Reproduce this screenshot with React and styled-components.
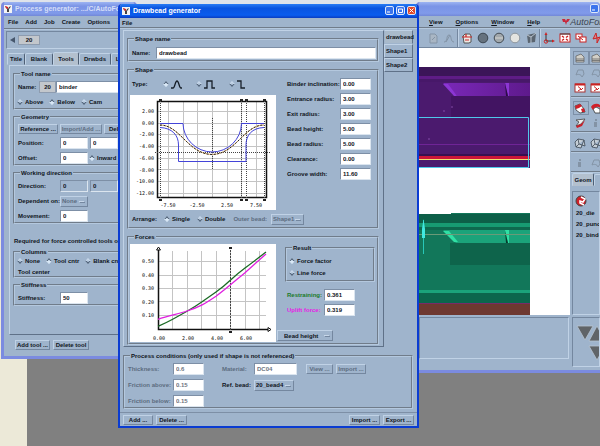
import React, { useState } from 'react';
import styled, { createGlobalStyle } from 'styled-components';

const GlobalStyle = createGlobalStyle`
  * { box-sizing: border-box; }
  body {
    margin: 0;
    font-family: "Liberation Sans", Arial, sans-serif;
    font-size: 6px;
    font-weight: bold;
    line-height: 8px;
    color: #10141c;
  }
  button, input, select { font: inherit; color: inherit; }
`;

const Desktop = styled.div`
  position: relative;
  min-height: 100vh;
  overflow: hidden;
  background:
    linear-gradient(#dfe3ea, #dfe3ea) top / 100% 4px no-repeat,
    linear-gradient(#ece9d8, #ece9d8) left / 27px 100% no-repeat,
    #808080;
`;

// Windows float on the desktop
const Window = styled.section`
  position: absolute;
  display: flex;
  flex-direction: column;
  background: #9fb4cc;
  border: 3px solid ${(p) => (p.$active ? '#0a3cd2' : '#7b8be0')};
  border-top: 0;
  border-radius: 4px 4px 0 0;
  overflow: hidden;
  white-space: nowrap;
`;

const ToolWindow = styled(Window)`
  left: 1px;
  top: 2px;
  width: 136px;
`;

const MainWindow = styled(Window)`
  left: calc(100% - 184px);
  right: 0;
  top: 2px;
  border-right: 0;
`;

const Dialog = styled(Window)`
  left: 118px;
  right: 181px;
  top: 4px;
  border-width: 0 2px 2px;
`;

const TitleBar = styled.header`
  display: flex;
  align-items: center;
  gap: 3px;
  height: 14px;
  padding: 0 1px 1px ${(p) => (p.$active ? 2 : 0)}px;
  color: ${(p) => (p.$active ? '#fff' : '#d5def8')};
  background: ${(p) =>
    p.$active
      ? 'linear-gradient(#2a7cf4, #0a54e0 30%, #0a5cee 80%, #0a3cc0)'
      : 'linear-gradient(#9db4f2, #7a94e6 30%, #809aea 80%, #7288d8)'};
`;

const Title = styled.h1`
  flex: 1;
  margin: 0;
  font-size: 7px;
  line-height: 10px;
`;

const CaptionButton = styled.button`
  display: grid;
  place-items: center;
  flex: none;
  width: 9px;
  height: 9px;
  padding: 0;
  border: 1px solid #dce6fa;
  border-radius: 2px;
  background: ${(p) => (p.$close ? '#e0492a' : '#3c74ec')};
  margin-left: -1px;
`;

const MenuBar = styled.nav`
  display: flex;
  gap: ${(p) => p.$gap || 7}px;
  align-items: center;
  height: ${(p) => p.$h || 14}px;
  padding-left: ${(p) => p.$left || 4}px;
  border-bottom: 2px groove #b4c8de;
`;

const MenuItem = styled.button`
  padding: 0;
  border: 0;
  background: none;
  line-height: 8px;
`;

const Group = styled.fieldset`
  display: flex;
  flex-direction: column;
  gap: 3px;
  min-width: 0;
  margin: 0;
  padding: ${(p) => p.$pad ?? '3px 1px 0'};
  border: 2px groove #b4c8de;
`;

const Legend = styled.legend`
  height: 8px;
  margin-left: 4px;
  padding: 0 1px;
`;

const Row = styled.div`
  display: flex;
  align-items: center;
  gap: ${(p) => p.$gap || 0}px;
  min-height: ${(p) => p.$h || 12}px;
  padding-left: 2px;
`;

const Label = styled.label`
  flex: none;
  width: ${(p) => (p.$w ? `${p.$w}px` : 'auto')};
  color: ${(p) => p.$color || 'inherit'};
`;

const dim = '#5c6c80';

const Input = styled.input`
  flex: ${(p) => (p.$w ? 'none' : '1')};
  width: ${(p) => (p.$w ? `${p.$w}px` : 'auto')};
  min-width: 0;
  height: 12px;
  padding: 0 0 0 2px;
  border: 1px solid;
  border-color: #7d8fa6 #dbe5ef #dbe5ef #7d8fa6;
  border-radius: 0;
  background: ${(p) => (p.$flat ? '#9fb4cc' : '#fff')};
  color: ${(p) => (p.$dim ? '#6c7480' : 'inherit')};
  outline: 0;
`;

const Button = styled.button`
  flex: none;
  width: ${(p) => (p.$w ? `${p.$w}px` : 'auto')};
  height: 10px;
  padding: 0;
  border: 1px solid;
  border-color: #c0d2e6 #74879f #74879f #c0d2e6;
  background: #9fb4cc;
  line-height: 7px;
  white-space: nowrap;
  color: ${(p) => (p.$dim ? dim : 'inherit')};
`;

const Select = styled.select`
  appearance: none;
  flex: none;
  width: ${(p) => p.$w}px;
  height: 11px;
  padding: 0 0 0 ${(p) => p.$left || 1}px;
  border: 1px solid;
  border-color: #c0d2e6 #74879f #74879f #c0d2e6;
  border-radius: 0;
  background:
    linear-gradient(#c6d6e8, #c6d6e8) right 3px top 4px / 5px 1px no-repeat,
    linear-gradient(#74879f, #74879f) right 2px top 5px / 5px 1px no-repeat,
    #9fb4cc;
  color: ${(p) => (p.$dim ? dim : 'inherit')};
`;

const RadioLabel = styled.label`
  display: flex;
  align-items: center;
  gap: 3px;
`;

// Motif style diamond, raised when off and sunken when on
const Radio = styled.input`
  appearance: none;
  width: 4px;
  height: 4px;
  margin: 0;
  border: 1px solid;
  border-color: #c8d8ea #4f6076 #4f6076 #c8d8ea;
  background: #b4c8de;
  transform: rotate(45deg);

  &:checked {
    border-color: #4f6076 #d8e6f4 #d8e6f4 #4f6076;
    background: #dcecfa;
  }
`;

const ToolStrip = styled.div`
  display: flex;
  align-items: center;
  gap: 3px;
  height: 18px;
  margin: 1px 0 3px 2px;
  padding-left: 3px;
  border: 1px solid;
  border-color: #74879f #c0d2e6 #c0d2e6 #74879f;
`;

const ArrowButton = styled.button`
  display: flex;
  padding: 0;
  border: 0;
  background: none;
`;

const Count = styled.output`
  width: ${(p) => p.$w}px;
  height: ${(p) => p.$h}px;
  line-height: ${(p) => p.$h - 1}px;
  text-align: center;
  border: 1px solid #8e9caf;
  background: #c3c7cc;
`;

const TabRow = styled.div`
  display: flex;
  align-items: flex-end;
  padding-left: ${(p) => p.$left ?? 3}px;
`;

const Tab = styled.button`
  flex: none;
  width: ${(p) => p.$w}px;
  height: ${(p) => (p.$on ? 13 : 12)}px;
  padding: 0;
  border: 1px solid;
  border-color: #c0d2e6 #4f6076 transparent #c0d2e6;
  border-radius: 2px 2px 0 0;
  background: ${(p) => (p.$on ? '#b3c0ce' : '#9fb4cc')};
`;

const Pane = styled.div`
  display: flex;
  flex-direction: column;
  gap: 3px;
  margin-left: 5px;
  padding: 4px 3px 28px;
  border: 1px solid;
  border-color: #c0d2e6 #5f7188 #5f7188 #c0d2e6;
`;

const Note = styled.p`
  margin: 10px 0 0 1px;
  height: 8px;
`;

const ButtonRow = styled.footer`
  display: flex;
  gap: 3px;
  padding: 5px 0 6px 11px;
`;

const DialogBody = styled.div`
  display: flex;
  padding: 1px 4px 0 3px;
`;

const Sheet = styled.div`
  flex: 1;
  min-width: 0;
  display: flex;
  flex-direction: column;
  gap: 4px;
  padding: 4px 4px 1px 3px;
  border: 1px solid;
  border-color: #c0d2e6 #5f7188 #5f7188 #c0d2e6;
`;

const SideTabs = styled.div`
  display: flex;
  flex-direction: column;
  width: 29px;
`;

const SideTab = styled.button`
  height: 14px;
  padding: 0 0 0 1px;
  text-align: left;
  border: 1px solid;
  border-color: ${(p) =>
    p.$on ? '#c0d2e6 #5f7188 #9fb4cc #9fb4cc' : '#c0d2e6 #5f7188 #5f7188 #c0d2e6'};
  background: ${(p) => (p.$on ? '#a9bacb' : '#9fb4cc')};
`;

const Columns = styled.div`
  display: flex;
  align-items: ${(p) => (p.$mid ? 'center' : 'stretch')};
  gap: ${(p) => p.$gap || 0}px;
`;

const Stack = styled.div`
  display: flex;
  flex-direction: column;
  flex: ${(p) => (p.$grow ? '1' : 'none')};
  gap: ${(p) => p.$gap}px;
  min-width: 0;
`;

const Plot = styled.svg`
  display: block;
  flex: none;
  background: #fff;
  font: 5px "DejaVu Sans Mono", monospace;
`;

const ForceSide = styled.div`
  flex: 1;
  display: flex;
  flex-direction: column;
  justify-content: space-between;
  align-items: flex-start;
  padding: 0 1px 1px;
`;

const ResultArea = styled.div`
  align-self: stretch;
  display: flex;
  flex-direction: column;
  gap: 3px;
  padding-left: 8px;
`;

const ResultBox = styled(Group)`
  margin-bottom: 4px;
`;

const Conditions = styled(Group)`
  margin: 5px 4px 0 3px;
`;

const DialogFooter = styled.footer`
  display: flex;
  gap: 3px;
  margin-top: 3px;
  padding: 2px 3px 1px;
  border-top: 1px solid #7d8fa6;
`;

const Push = styled.span`
  flex: 1;
`;

const Workspace = styled.div`
  display: grid;
  grid-template-columns: 1fr 29px;
  grid-template-rows: 267px 53px;
  gap: 2px 1px;
`;

const Viewport = styled.div`
  background: #fff;
  overflow: hidden;
`;

const Well = styled.div`
  flex: 1;
  margin: ${(p) => p.$m || '0'};
  padding: ${(p) => p.$pad || '0'};
  border: 1px solid;
  border-color: #74879f #c0d2e6 #c0d2e6 #74879f;
  overflow: hidden;
`;

const IconBar = styled.div`
  display: flex;
  align-items: center;
  gap: 2px;
  height: 19px;
  padding-left: 7px;
  border-bottom: 1px solid #74879f;
`;

const Divider = styled.i`
  flex: none;
  width: 2px;
  height: 18px;
  margin: 0 -1px;
  border-left: 1px solid #74879f;
  background: #c0d2e6;
`;

const IconButton = styled.button`
  flex: none;
  display: flex;
  padding: 0;
  border: ${(p) => (p.$boxed ? '1px solid #7d8fa6' : '1px solid transparent')};
  background: none;
`;

const SideColumn = styled.div`
  display: flex;
  flex-direction: column;
  overflow: hidden;
`;

const Palette = styled.div`
  display: grid;
  grid-template-columns: 16px 16px;
  grid-auto-rows: 15px;
  align-items: center;
  padding: 2px 0 1px 2px;
  border-bottom: 2px groove #b4c8de;
`;

const PartList = styled.ul`
  margin: 0;
  padding: 0 0 0 2px;
  list-style: none;
  line-height: 11px;
`;

const Logo = styled.span`
  display: flex;
  align-items: center;
  margin-left: 9px;
  font-size: 9px;
  font-style: italic;
  font-weight: normal;
  color: #3c4450;
`;

const AppIcon = () => (
  <svg width="8" height="8" viewBox="0 0 8 8">
    <rect width="8" height="8" fill="#f4f4f4" />
    <path d="M1 1L3 2L4 4L5 2L7 1L6 3L5 4V7H3V4L2 3Z" fill="#444" />
    <path d="M1 1L4 2V4L2 3Z" fill="#d22" />
  </svg>
);

const shapes = {
  round: 'M0 8H2C4 8 4 1 6 1C8 1 8 8 10 8H11',
  square: 'M0 8H3V1H8V8H11',
  step: 'M0 1H4V8H8',
};

const ShapeIcon = ({ kind }) => (
  <svg width="11" height="9" viewBox="0 0 11 9">
    <path d={shapes[kind]} fill="none" stroke="#18202a" strokeWidth="1.3" />
  </svg>
);

const icons = {
  page: <path d="M3 2H8L10 4V11H3Z M5 8L8 5" fill="#a9b6c4" stroke="#8393a5" />,
  curve: <path d="M1 10C5 10 3 3 6 3C9 3 7 10 11 10M3 10L7 3" fill="none" stroke="#8393a5" />,
  box: (
    <>
      <path d="M2 4L4 2H9L10 4V10L8 11H3Z" fill="#eceae6" stroke="#555" />
      <path d="M1 5H11M5 2V5M4 8H8" fill="none" stroke="#c22" strokeWidth="1.2" />
    </>
  ),
  ballDark: <circle cx="6" cy="6" r="4.8" fill="#66727e" stroke="#3c4650" />,
  ballMid: (
    <>
      <circle cx="6" cy="6" r="4.8" fill="#a2a8ac" stroke="#444c54" />
      <path d="M2 6H10" stroke="#d6d6d2" />
    </>
  ),
  ballLight: <circle cx="6" cy="6" r="4.8" fill="#e4e4e0" stroke="#8c949c" />,
  cube: (
    <>
      <path d="M2 3L11 1L10 10L3 11Z" fill="#5b6570" />
      <path d="M2 3L6 5L11 1M6 5V11" stroke="#b8c2cc" fill="none" />
    </>
  ),
  axes: (
    <>
      <path d="M3 2V9H10" fill="none" stroke="#333" />
      <circle cx="3" cy="9.5" r="1.7" fill="none" stroke="#c22" />
      <path d="M1.5 3L3 0L4.5 3ZM9 7.5L12 9L9 10.5Z" fill="#c22" />
    </>
  ),
  fit: (
    <>
      <rect x="1" y="2" width="10" height="8" fill="#fff" stroke="#c22" />
      <path d="M3 4L5 5.500M9 4L7 5.500M3 8.500L5 7M9 8.500L7 7" stroke="#c22" strokeWidth="1.4" />
      <path d="M1 2H11" stroke="#444" />
    </>
  ),
  windows: (
    <>
      <rect x="1" y="2" width="6" height="5" fill="#fff" stroke="#c22" />
      <rect x="5" y="5" width="6" height="5" fill="#fff" stroke="#c22" />
      <path d="M3 4L8 8" stroke="#c22" />
    </>
  ),
  rotate: <path d="M5 1L2 7L6 6V11L9 5L6 6Z" fill="#d98a92" stroke="#c22" />,
  sheet: <path d="M2 4L7 2L10 5V10H2ZM2 7H10M2 8.5H10" fill="#d2d0c8" stroke="#666" strokeWidth=".8" />,
  ghost: <path d="M2 8L4 3H9L10 7L8 10C7 7 4 7 2 8Z" fill="none" stroke="#8393a5" />,
  redBox: (
    <>
      <rect x="1" y="2" width="10" height="8" fill="#fff" stroke="#a33" />
      <path d="M1 2.5H11" stroke="#c22" strokeWidth="2" />
      <path d="M4 4.5L7 7L4 9M7 8L9 6" fill="none" stroke="#c22" />
    </>
  ),
  redDie: (
    <>
      <path d="M1 4L6 2L10 7L11 10L6 11L2 8Z" fill="#fff" stroke="#333" strokeWidth=".8" />
      <path d="M1 4L6 2L8 4L5 6L2 7ZM7 7L10 6L11 10L8 10Z" fill="#d0202a" />
    </>
  ),
  redArch: (
    <>
      <path d="M3 7L6 5L10 7V11H5Z" fill="#fff" stroke="#333" strokeWidth=".8" />
      <path d="M1 5C3 1 9 1 11 4V7C9 4 5 4 3 8Z" fill="#d0202a" />
    </>
  ),
  wedge: (
    <>
      <path d="M2 3L11 2L7 7L2 9L5 5Z" fill="#eee" stroke="#444" strokeWidth=".8" />
      <path d="M2 9L7 7L11 3L8 9L3 11Z" fill="#c8202a" />
    </>
  ),
  mesh: <path d="M1 5L4 2L10 3L11 9L8 8L7 11L2 10ZM4 2L5 7L2 10M5 7L8 8L10 3" fill="#c5ced6" stroke="#3c4854" strokeWidth=".8" />,
  post: <path d="M5 2H7V4H5ZM4 5H7V10H4Z" fill="#8393a5" />,
  redBall: (
    <>
      <circle cx="6" cy="6" r="5" fill="#d0202a" stroke="#444" />
      <path d="M6 2L10 4L8 7L5 6V8L9 10" fill="none" stroke="#fff" strokeWidth="1.5" />
    </>
  ),
};

const Icon = ({ name }) => (
  <svg width="12" height="12" viewBox="0 0 12 12">{icons[name]}</svg>
);

const topIcons = ['page', 'curve', '|', 'box', 'ballDark', 'ballMid', 'ballLight', 'cube', '|', 'axes', 'fit', 'windows', 'rotate'];

const palettes = [
  ['sheet', 'sheet', 'ghost', 'ghost', 'redBox', 'redBox'],
  ['redDie', 'redArch', 'wedge', 'post'],
  ['mesh', 'mesh'],
  ['post', 'ghost'],
];

const params = [
  ['Binder inclination:', '0.00'],
  ['Entrance radius:', '3.00'],
  ['Exit radius:', '3.00'],
  ['Bead height:', '5.00'],
  ['Bead radius:', '5.00'],
  ['Clearance:', '0.00'],
  ['Groove width:', '11.60'],
];

const Choice = ({ name, text, checked, onChange, children }) => (
  <RadioLabel>
    <Radio type="radio" name={name} checked={checked} onChange={onChange} aria-label={text} />
    {children || text}
  </RadioLabel>
);

const Field = ({ id, label, w, labelW, value, color, ...rest }) => (
  <>
    <Label htmlFor={id} $w={labelW} $color={color}>{label}</Label>
    <Input id={id} $w={w} defaultValue={value} {...rest} />
  </>
);

const ShapePlot = () => (
  <Plot width="146" height="115" viewBox="0 0 146 115">
    <g stroke="#c4c4c4">
      {[38, 53, 67, 82, 97, 111, 126].map((x) => <path key={x} d={`M${x}.5 6V102`} />)}
      {[16, 28, 39, 51, 63, 74, 86, 98].map((y) => <path key={y} d={`M27 ${y}.5H137`} />)}
    </g>
    <rect x="27.5" y="6.5" width="109" height="96" fill="none" stroke="#111" strokeWidth="1.5" />
    <g fill="none" stroke="#444" strokeDasharray="1 1">
      {[30, 111, 116, 134].map((x) => <path key={x} d={`M${x}.5 4V106`} />)}
      <path d="M25 57.5H140M82.5 23V74" />
    </g>
    {[30, 111, 116, 134].map((x) => (
      <path key={x} d={`M${x - 1} 4h3v2h-3zM${x - 1} 104h3v2h-3z`} fill="#222" />
    ))}
    <path d="M30 30C50 30 58 59 82 59.5C106 59 114 30 134 30" fill="none" stroke="#e0b070" />
    <path d="M30 30C50 30 58 59 82 59.5C106 59 114 30 134 30" fill="none" stroke="#222" strokeDasharray="2 1.5" />
    <g fill="none" stroke="#4444d8">
      <path d="M30 28.5H53A29.5 29 0 0 0 82 57A29.5 29 0 0 0 111.5 28.5H134" />
      <path d="M30 32.5C42 33 48.5 40 48.5 50V66.5H116V50C116 40 122 33 134 32.5" />
    </g>
    <g textAnchor="end">
      {['2.00', '0.00', '-2.00', '-4.00', '-6.00', '-8.00', '-10.00', '-12.00'].map((t, i) => (
        <text key={t} x="24" y={18 + Math.round(i * 11.7)}>{t}</text>
      ))}
    </g>
    <g textAnchor="middle">
      {['-7.50', '-2.50', '2.50', '7.50'].map((t, i) => (
        <text key={t} x={38 + Math.round(i * 29.4)} y="112">{t}</text>
      ))}
    </g>
  </Plot>
);

const ForcePlot = () => (
  <Plot width="146" height="98" viewBox="0 0 146 98">
    <g stroke="#c4c4c4">
      {[42, 57, 71, 86, 100, 115, 129].map((x) => <path key={x} d={`M${x}.5 7V85`} />)}
      {[17, 31, 44, 57, 71].map((y) => <path key={y} d={`M28 ${y}.5H136`} />)}
    </g>
    <path d="M28.5 6V85.5H139" fill="none" stroke="#111" strokeWidth="1.5" />
    <path d="M26.5 6L28.5 3L30.5 6ZM138 83.5L141 85.5L138 87.5Z" fill="#fff" stroke="#111" />
    <path d="M100.5 3V89" stroke="#444" strokeDasharray="2 1" />
    <path d="M99 3h3v2h-3zM99 87h3v2h-3z" fill="#222" />
    <path d="M28 82.3Q36 79 42.7 75.3T57 67.3T71.7 58T86 48T100.3 36.3T115 24T136 8" fill="none" stroke="#1a6a24" strokeWidth="1.3" />
    <path d="M28 75.3C40 71.5 50 69.5 57 67C70 63 76 59 86 52.3C96 45 105 37 115 28.7L136 10" fill="none" stroke="#e020e0" strokeWidth="1.3" />
    <g textAnchor="end">
      {['0.50', '0.40', '0.30', '0.20', '0.10'].map((t, i) => (
        <text key={t} x="24" y={19 + Math.round(i * 13.5)}>{t}</text>
      ))}
    </g>
    <g textAnchor="middle">
      {['0.00', '2.00', '4.00', '6.00'].map((t, i) => (
        <text key={t} x={29 + i * 29} y="96">{t}</text>
      ))}
    </g>
  </Plot>
);

const ModelView = () => (
  <svg width="152" height="267" viewBox="0 0 152 267">
    <defs>
      <linearGradient id="glow" x1="0" y1="0" x2="1" y2="0">
        <stop offset="0" stopColor="#7a28b8" />
        <stop offset="1" stopColor="#5e1a8c" />
      </linearGradient>
    </defs>
    <path d="M0 19H111V120H0Z" fill="#4b1a6e" />
    <path d="M0 19H111V28H0Z" fill="#3b1558" />
    <path d="M0 28H111V31H0Z" fill="#5e1c86" />
    <path d="M0 31H111V34H0Z" fill="#471869" />
    <path d="M24 35H111V48H38Z" fill="url(#glow)" />
    <path d="M24 36H29L38 48H35Z" fill="#8c36d4" />
    <path d="M86 35H90V48H89Z" fill="#8c36d4" />
    <path d="M86 35L89 48H87Z" fill="#2c0c48" />
    <path d="M32 48H111V69H32Z" fill="#421462" />
    <path d="M0 96H111V97H0Z" fill="#6f2496" />
    <path d="M0 106H111V108H0Z" fill="#381050" />
    <path d="M0 108H111V111H0Z" fill="#cc1638" />
    <path d="M0 111H111V112H0Z" fill="#f0e070" />
    <path d="M0 69.5H109.5V119.5H0" fill="none" stroke="#50c8ea" />
    <g fill="#9a60c0">
      <circle cx="33" cy="59" r=".7" />
      <circle cx="25" cy="63" r=".7" />
      <circle cx="10" cy="91" r=".7" />
    </g>

    <path d="M0 166H32V165H111V255H0Z" fill="#12775a" />
    <path d="M0 166H111V175H0Z" fill="#0d5f48" />
    <path d="M0 175H111V179H0Z" fill="#179a72" />
    <path d="M0 179H111V182H0Z" fill="#0e684e" />
    <path d="M24 182H111V195H37Z" fill="#1ba37a" />
    <path d="M24 183H30L39 194H35Z" fill="#30e0a4" />
    <path d="M86 182H90V195H89Z" fill="#30e0a4" />
    <path d="M86 183L89 195H87Z" fill="#063c2c" />
    <path d="M0 186.5H111" stroke="#6a9a78" />
    <path d="M31 195H111V217H31Z" fill="#0e644b" />
    <path d="M0 242H111V245H0Z" fill="#1ba37a" />
    <path d="M0 245H111V255H0Z" fill="#0c664c" />
    <path d="M4.5 172V206" stroke="#28c8b8" />
    <path d="M3 181L4.5 171L6 181V190H3Z" fill="#40e8e0" />
    <path d="M0 255H111V267H0Z" fill="#6e3830" />
    <path d="M0 255H111V256H0Z" fill="#7a2a68" />
  </svg>
);

const ToolGenerator = () => {
  const [place, setPlace] = useState('Below');
  const [column, setColumn] = useState('Tool cntr');
  const [inward, setInward] = useState(true);

  return (
    <ToolWindow>
      <TitleBar><AppIcon /><Title>Process generator: .../C/AutoForm</Title></TitleBar>
      <MenuBar>
        {['File', 'Add', 'Job', 'Create', 'Options'].map((m) => <MenuItem key={m}>{m}</MenuItem>)}
      </MenuBar>
      <ToolStrip>
        <ArrowButton aria-label="Previous">
          <svg width="5" height="6" viewBox="0 0 5 6"><path d="M5 0V6L0 3Z" fill="#46566c" /></svg>
        </ArrowButton>
        <Count $w={22} $h={10}>20</Count>
      </ToolStrip>
      <TabRow>
        <Tab $w={18}>Title</Tab>
        <Tab $w={28}>Blank</Tab>
        <Tab $w={26} $on>Tools</Tab>
        <Tab $w={32}>Drwbds</Tab>
        <Tab $w={24}>Lube</Tab>
      </TabRow>
      <Pane>
        <Group>
          <Legend>Tool name</Legend>
          <Row>
            <Label htmlFor="toolName" $w={21}>Name:</Label>
            <Count $w={17} $h={12}>20</Count>
            <Input id="toolName" defaultValue="binder" />
          </Row>
          <Row $gap={7}>
            {['Above', 'Below', 'Cam'].map((t) => (
              <Choice key={t} name="place" text={t} checked={place === t} onChange={() => setPlace(t)} />
            ))}
          </Row>
        </Group>
        <Group>
          <Legend>Geometry</Legend>
          <Row $gap={2} $h={9}>
            <Button $w={40}>Reference ...</Button>
            <Button $w={42} $dim>Import/Add ...</Button>
            <Button $w={28}>Delete</Button>
          </Row>
          <Row $gap={2}>
            <Field id="posX" label="Position:" labelW={40} w={28} value="0" />
            <Input aria-label="Position y" $w={28} defaultValue="0" />
          </Row>
          <Row>
            <Label htmlFor="offset" $w={42}>Offset:</Label>
            <Input id="offset" $w={28} defaultValue="0" />
            <Row>
              <Choice name="side" text="Inward" checked={inward} onChange={() => setInward(true)} />
            </Row>
          </Row>
        </Group>
        <Group>
          <Legend>Working direction</Legend>
          <Row $gap={2}>
            <Label htmlFor="dirX" $w={40}>Direction:</Label>
            <Input id="dirX" $w={28} $flat defaultValue="0" />
            <Input aria-label="Direction y" $w={28} $flat defaultValue="0" />
          </Row>
          <Row>
            <Label htmlFor="dependent" $w={42}>Dependent on:</Label>
            <Select id="dependent" $w={28} $dim><option>None</option></Select>
          </Row>
          <Row>
            <Label htmlFor="movement" $w={42}>Movement:</Label>
            <Input id="movement" $w={28} defaultValue="0" />
          </Row>
        </Group>
        <Note>Required for force controlled tools only</Note>
        <Group $pad="1px 1px 0">
          <Legend>Columns</Legend>
          <Row $gap={7} $h={8}>
            {['None', 'Tool cntr', 'Blank cntr'].map((t) => (
              <Choice key={t} name="column" text={t} checked={column === t} onChange={() => setColumn(t)} />
            ))}
          </Row>
          <Row $h={8}>Tool center</Row>
        </Group>
        <Group>
          <Legend>Stiffness</Legend>
          <Row>
            <Label htmlFor="stiffness" $w={42}>Stiffness:</Label>
            <Input id="stiffness" $w={28} defaultValue="50" />
          </Row>
        </Group>
      </Pane>
      <ButtonRow>
        <Button $w={35}>Add tool ...</Button>
        <Button $w={36}>Delete tool</Button>
      </ButtonRow>
    </ToolWindow>
  );
};

const MainApp = () => (
  <MainWindow>
    <TitleBar>
      <Title />
      <CaptionButton aria-label="Minimise">
        <svg width="5" height="5" viewBox="0 0 5 5"><path d="M0 4H3" stroke="#fff" /></svg>
      </CaptionButton>
    </TitleBar>
    <MenuBar $gap={13} $left={10} $h={13}>
      {['View', 'Options', 'Window', 'Help'].map((m) => (
        <MenuItem key={m}><u>{m[0]}</u>{m.slice(1)}</MenuItem>
      ))}
      <Logo>
        <svg width="8" height="8" viewBox="0 0 8 8"><path d="M0 1H3L4 3L5 1H8L6 4H5L4 7L3 4H1Z" fill="#c8283c" /></svg>
        AutoForm
      </Logo>
    </MenuBar>
    <IconBar>
      {topIcons.map((n, i) =>
        n === '|' ? <Divider key={i} /> : <IconButton key={i} aria-label={n}><Icon name={n} /></IconButton>
      )}
    </IconBar>
    <Workspace>
      <Viewport><ModelView /></Viewport>
      <SideColumn>
        {palettes.map((p, i) => (
          <Palette key={i}>
            {p.map((n, j) => (
              <IconButton key={j} $boxed={n === 'sheet' || n === 'redDie'} aria-label={n}><Icon name={n} /></IconButton>
            ))}
          </Palette>
        ))}
        <TabRow $left={1}>
          <Tab $w={22} $on>Geom</Tab>
          <Tab $w={20} />
        </TabRow>
        <Well $m="5px 0 0 1px" $pad="2px 0 0 1px">
          <IconButton aria-label="Parts"><Icon name="redBall" /></IconButton>
          <PartList>
            <li>20_die</li>
            <li>20_punch</li>
            <li>20_binder</li>
          </PartList>
        </Well>
      </SideColumn>
      <Well $m="0 1px 11px 0" />
      <Well $m="0 0 3px 1px">
        <svg width="40" height="50" viewBox="0 0 40 50">
          <g fill="#606468" stroke="#b8c4d0" strokeWidth=".8">
            <path d="M4 8H20L12 22Z" />
            <path d="M24 8L32 23H16Z" />
            <path d="M16 28H32L24 42Z" />
          </g>
        </svg>
      </Well>
    </Workspace>
  </MainWindow>
);

const DrawbeadDialog = () => {
  const [shape, setShape] = useState('round');
  const [arrange, setArrange] = useState('Single');
  const [result, setResult] = useState('Force factor');
  const [tab, setTab] = useState('drawbead');

  return (
    <Dialog $active>
      <TitleBar $active>
        <AppIcon />
        <Title>Drawbead generator</Title>
        <CaptionButton aria-label="Minimise">
          <svg width="5" height="5" viewBox="0 0 5 5"><path d="M0 4H3" stroke="#fff" /></svg>
        </CaptionButton>
        <CaptionButton aria-label="Maximise">
          <svg width="5" height="5" viewBox="0 0 5 5"><path d="M.5 1H4.5V4.5H.5Z" stroke="#fff" fill="none" /></svg>
        </CaptionButton>
        <CaptionButton $close aria-label="Close">
          <svg width="5" height="5" viewBox="0 0 5 5"><path d="M.5 .5L4.5 4.5M4.5 .5L.5 4.5" stroke="#fff" /></svg>
        </CaptionButton>
      </TitleBar>
      <MenuBar $left={2} $h={11}><MenuItem>File</MenuItem></MenuBar>
      <DialogBody>
        <Sheet>
          <Group $pad="4px 1px 1px">
            <Legend>Shape name</Legend>
            <Row>
              <Field id="shapeName" label="Name:" labelW={24} value="drawbead" />
            </Row>
          </Group>
          <Group $pad="4px 1px 2px">
            <Legend>Shape</Legend>
            <Columns $gap={11}>
              <Stack $gap={5}>
                <Row $gap={15}>
                  <Label $w={17}>Type:</Label>
                  {Object.keys(shapes).map((k) => (
                    <Choice key={k} name="shape" text={k} checked={shape === k} onChange={() => setShape(k)}>
                      <ShapeIcon kind={k} />
                    </Choice>
                  ))}
                </Row>
                <ShapePlot />
              </Stack>
              <Stack $gap={3} $grow>
                {params.map(([label, value], i) => (
                  <Columns key={label} $mid>
                    <Field id={`param${i}`} label={label} labelW={53} w={31} value={value} />
                  </Columns>
                ))}
              </Stack>
            </Columns>
            <Row $gap={8}>
              <Label>Arrange:</Label>
              {['Single', 'Double'].map((t) => (
                <Choice key={t} name="arrange" text={t} checked={arrange === t} onChange={() => setArrange(t)} />
              ))}
              <Columns $gap={4} $mid>
                <Label htmlFor="outer" $color={dim}>Outer bead:</Label>
                <Select id="outer" $w={33} $dim><option>Shape1</option></Select>
              </Columns>
            </Row>
          </Group>
          <Group $pad="3px 1px 1px">
            <Legend>Forces</Legend>
            <Columns>
              <ForcePlot />
              <ForceSide>
                <ResultArea>
                  <ResultBox $pad="4px 1px 3px">
                    <Legend>Result</Legend>
                    {['Force factor', 'Line force'].map((t) => (
                      <Row key={t} $h={9}>
                        <Choice name="result" text={t} checked={result === t} onChange={() => setResult(t)} />
                      </Row>
                    ))}
                  </ResultBox>
                  <Row>
                    <Field id="restraining" label="Restraining:" labelW={37} w={31} value="0.361" color="#1a7a2a" />
                  </Row>
                  <Row>
                    <Field id="uplift" label="Uplift force:" labelW={37} w={31} value="0.319" color="#e620e6" />
                  </Row>
                </ResultArea>
                <Select aria-label="Plot over" $w={56} $left={6}><option>Bead height</option></Select>
              </ForceSide>
            </Columns>
          </Group>
        </Sheet>
        <SideTabs>
          {['drawbead', 'Shape1', 'Shape2'].map((t) => (
            <SideTab key={t} $on={tab === t} onClick={() => setTab(t)}>{t}</SideTab>
          ))}
        </SideTabs>
      </DialogBody>
      <Conditions>
        <Legend>Process conditions (only used if shape is not referenced)</Legend>
        <Columns $gap={16}>
          <Stack $gap={4}>
            <Row>
              <Field id="thick" label="Thickness:" labelW={45} w={31} value="0.6" color={dim} $dim />
            </Row>
            <Row>
              <Field id="above" label="Friction above:" labelW={45} w={31} value="0.15" color={dim} $dim />
            </Row>
            <Row>
              <Field id="below" label="Friction below:" labelW={45} w={31} value="0.15" color={dim} $dim />
            </Row>
          </Stack>
          <Stack $gap={4}>
            <Row>
              <Field id="material" label="Material:" labelW={32} w={43} value="DC04" color={dim} $dim />
              <Row $gap={3}>
                <Label $w={4} />
                <Button $w={27} $dim>View ...</Button>
                <Button $w={30} $dim>Import ...</Button>
              </Row>
            </Row>
            <Row>
              <Label htmlFor="refBead" $w={32}>Ref. bead:</Label>
              <Select id="refBead" $w={40}><option>20_bead4</option></Select>
            </Row>
          </Stack>
        </Columns>
      </Conditions>
      <DialogFooter>
        <Button $w={30}>Add ...</Button>
        <Button $w={31}>Delete ...</Button>
        <Push />
        <Button $w={31}>Import ...</Button>
        <Button $w={31}>Export ...</Button>
      </DialogFooter>
    </Dialog>
  );
};

const App = () => (
  <Desktop>
    <GlobalStyle />
    <MainApp />
    <ToolGenerator />
    <DrawbeadDialog />
  </Desktop>
);

export default App;
